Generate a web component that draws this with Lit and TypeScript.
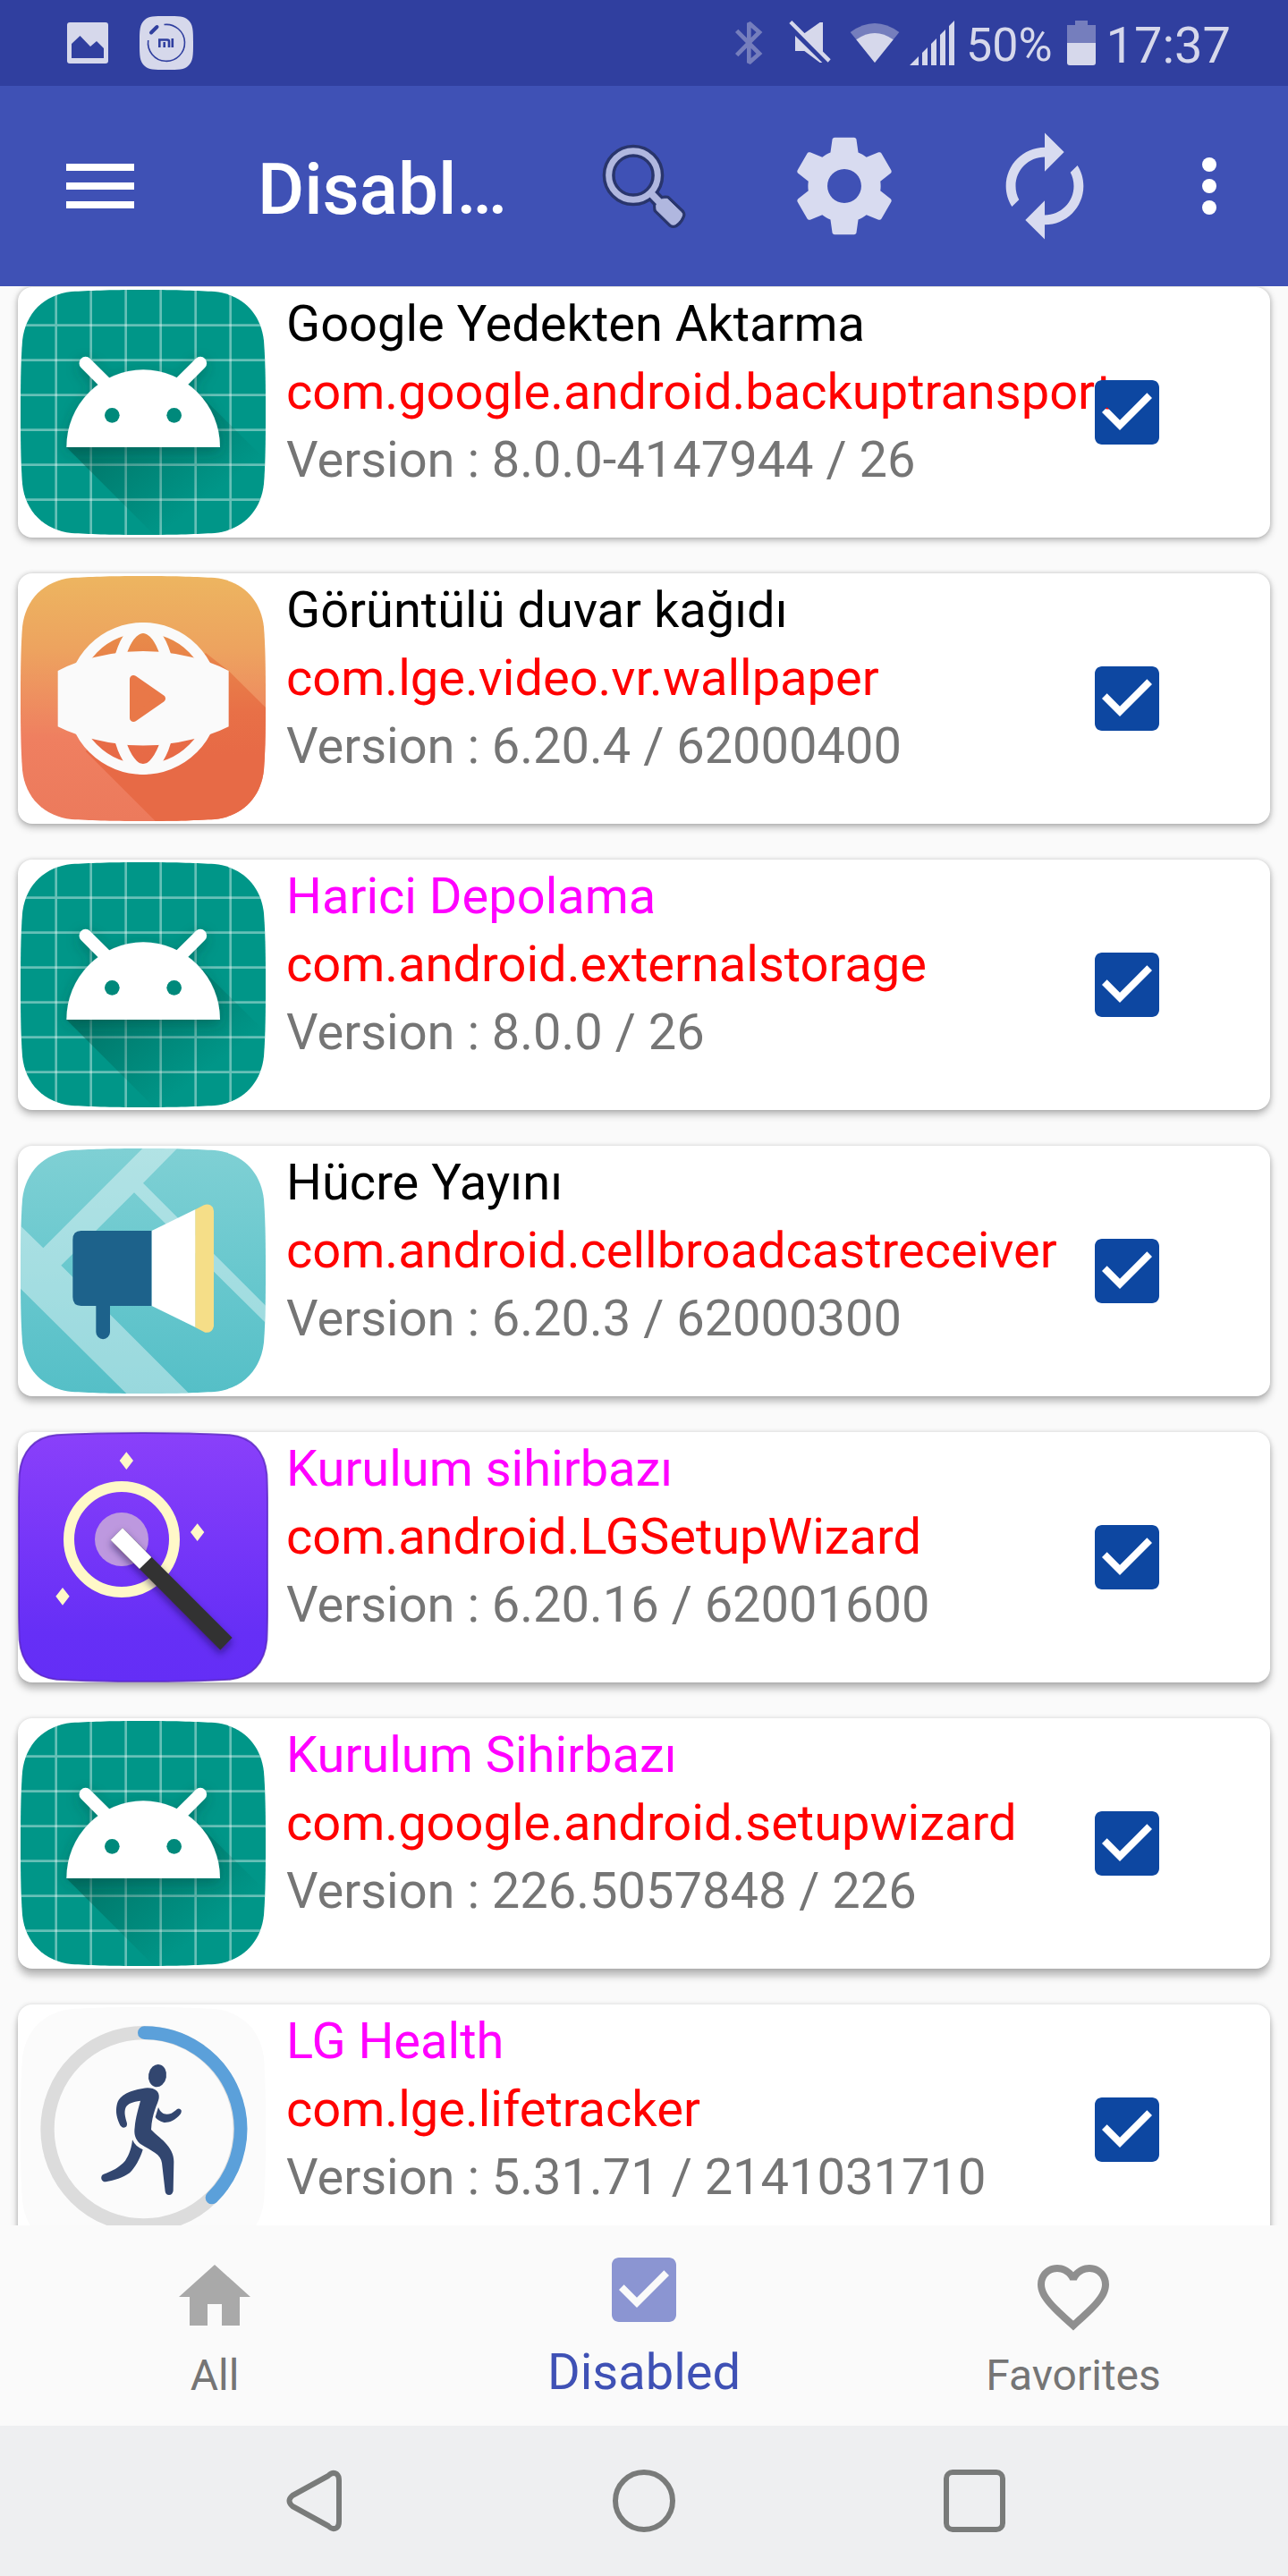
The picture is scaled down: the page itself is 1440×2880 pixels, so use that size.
import { LitElement, html, svg, css } from "lit";
import { customElement, property, state } from "lit/decorators.js";
import { classMap } from "lit/directives/class-map.js";
import { styleMap } from "lit/directives/style-map.js";

type IconName = "android" | "video" | "broadcast" | "wizard" | "health";

interface AppInfo {
  name: string;
  pkg: string;
  version: string;
  icon: IconName;
  system: boolean;
}

const APPS: AppInfo[] = [
  { name: "Google Yedekten Aktarma", pkg: "com.google.android.backuptransport", version: "8.0.0-4147944 / 26", icon: "android", system: false },
  { name: "Görüntülü duvar kağıdı", pkg: "com.lge.video.vr.wallpaper", version: "6.20.4 / 62000400", icon: "video", system: false },
  { name: "Harici Depolama", pkg: "com.android.externalstorage", version: "8.0.0 / 26", icon: "android", system: true },
  { name: "Hücre Yayını", pkg: "com.android.cellbroadcastreceiver", version: "6.20.3 / 62000300", icon: "broadcast", system: false },
  { name: "Kurulum sihirbazı", pkg: "com.android.LGSetupWizard", version: "6.20.16 / 62001600", icon: "wizard", system: true },
  { name: "Kurulum Sihirbazı", pkg: "com.google.android.setupwizard", version: "226.5057848 / 226", icon: "android", system: true },
  { name: "LG Health", pkg: "com.lge.lifetracker", version: "5.31.71 / 2141031710", icon: "health", system: true },
];

const SQUIRCLE =
  "M480 42C600 42 660 45 720 48C812 58 875 120 885 213C891 290 891 390 891 453C891 516 891 616 885 693C875 786 812 848 720 858C660 861 600 864 480 864C360 864 300 861 240 858C148 848 85 786 75 693C69 616 69 516 69 453C69 390 69 290 75 213C85 120 148 58 240 48C300 45 360 42 480 42Z";

const CHECK_BOX =
  "M19 3H5c-1.11 0-2 .9-2 2v14c0 1.1.89 2 2 2h14c1.11 0 2-.9 2-2V5c0-1.1-.89-2-2-2zm-9 14l-5-5 1.41-1.41L10 14.17l7.59-7.59L19 8l-9 9z";

const GRID = [0, 1, 2, 3, 4, 5];

const ICONS = {
  android: svg`
    <defs>
      <clipPath id="shape"><path d=${SQUIRCLE} /></clipPath>
      <linearGradient id="long" gradientUnits="userSpaceOnUse" x1="350" y1="450" x2="620" y2="800">
        <stop offset="0" stop-color="#004d40" stop-opacity=".5" />
        <stop offset="1" stop-color="#004d40" stop-opacity="0" />
      </linearGradient>
      <filter id="soft" x="-20%" y="-20%" width="140%" height="160%">
        <feDropShadow dx="0" dy="14" stdDeviation="22" flood-color="#003d33" flood-opacity=".35" />
      </filter>
    </defs>
    <path d=${SQUIRCLE} fill="#009688" />
    <g clip-path="url(#shape)">
      ${GRID.map((i) => svg`<path d=${`M${188 + i * 117} 30V880M60 ${161 + i * 117}H900`} stroke="#fff" stroke-opacity=".4" stroke-width="8" />`)}
      <path d="M223 570L600 947H1000V720L664 388Z" fill="url(#long)" />
    </g>
    <g filter="url(#soft)">
      <path d="M223 570A257.500 260 0 0 1 738 570Z" fill="#fff" />
      <path d="M287 288L358 359M672 288L601 359" stroke="#fff" stroke-width="43" stroke-linecap="round" />
    </g>
    <circle cx="376" cy="463" r="25" fill="#00897b" />
    <circle cx="584" cy="463" r="25" fill="#00897b" />
  `,
  video: svg`
    <defs>
      <clipPath id="shape"><path d=${SQUIRCLE} /></clipPath>
      <linearGradient id="bg" x1="0" y1="0" x2="0" y2="1">
        <stop offset="0" stop-color="#edb560" />
        <stop offset=".3" stop-color="#eda35f" />
        <stop offset=".66" stop-color="#ef7f60" />
        <stop offset="1" stop-color="#ec7a5c" />
      </linearGradient>
      <linearGradient id="deep" gradientUnits="userSpaceOnUse" x1="0" y1="230" x2="0" y2="640">
        <stop offset="0" stop-color="#e88c4a" />
        <stop offset=".65" stop-color="#e87047" />
        <stop offset="1" stop-color="#e76a46" />
      </linearGradient>
    </defs>
    <path d=${SQUIRCLE} fill="url(#bg)" />
    <path d="M690 300L767 360L960 552V900H557L287 630Z" fill="url(#deep)" clip-path="url(#shape)" />
    <circle cx="480" cy="453" r="237" fill="url(#deep)" stroke="#fafafa" stroke-width="36" />
    <ellipse cx="480" cy="453" rx="96" ry="237" fill="none" stroke="#fafafa" stroke-width="36" />
    <path d="M194 360Q225 343 257 332Q480 256 704 332Q736 343 767 360V547Q736 563 704 573Q480 648 257 573Q225 563 194 547Z" fill="#fafafa" />
    <path d="M448 388V518L542 453Z" fill="#e97848" stroke="#e97848" stroke-width="26" stroke-linejoin="round" />
  `,
  broadcast: svg`
    <defs>
      <clipPath id="shape"><path d=${SQUIRCLE} /></clipPath>
      <linearGradient id="bg" x1="0" y1="0" x2="0" y2="1">
        <stop offset="0" stop-color="#7fd0d4" />
        <stop offset=".5" stop-color="#69c8ce" />
        <stop offset="1" stop-color="#55bfc7" />
      </linearGradient>
    </defs>
    <path d=${SQUIRCLE} fill="url(#bg)" />
    <path d="M487 33L603 33L480 158L900 578V636L450 190L205 434L644 874H434L60 503V293L145 376Z" fill="#fff" fill-opacity=".4" clip-path="url(#shape)" />
    <path d="M509 318H272Q244 318 244 348V541Q244 570 272 570H322V658A23 23 0 0 0 369 658V570H509Z" fill="#1d628b" />
    <path d="M509 318L656 246V642L509 570Z" fill="#fff" />
    <path d="M655 247L684 232Q702 225 714 240L717 252V638Q712 662 688 659L655 642Z" fill="#f5de88" />
  `,
  wizard: svg`
    <defs>
      <linearGradient id="bg" x1="0" y1="0" x2="0" y2="1">
        <stop offset="0" stop-color="#8a40fa" />
        <stop offset=".45" stop-color="#7636f8" />
        <stop offset=".8" stop-color="#662ff6" />
        <stop offset="1" stop-color="#642ef6" />
      </linearGradient>
      <filter id="soft" x="-20%" y="-20%" width="140%" height="150%">
        <feDropShadow dx="0" dy="14" stdDeviation="12" flood-color="#14003c" flood-opacity=".5" />
      </filter>
    </defs>
    <path d="M480 36C620 36 700 39 770 43C845 50 888 98 895 175C899 260 897 380 897 453C897 526 899 646 895 731C888 808 845 856 770 863C700 867 620 870 480 870C340 870 260 867 190 863C115 856 72 808 65 731C61 646 63 526 63 453C63 380 61 260 65 175C72 98 115 50 190 43C260 39 340 36 480 36Z" fill="url(#bg)" stroke="#5724bd" stroke-opacity=".75" stroke-width="6" />
    <circle cx="408" cy="393" r="177" fill="none" stroke="#fff8c8" stroke-width="36" />
    <circle cx="408" cy="393" r="90" fill="#bd98df" />
    <path d="M424 100L447 129L424 159L401 129ZM662 340L685 369L662 399L639 369ZM210 555L233 584L210 614L187 584Z" fill="#fff8c8" />
    <g filter="url(#soft)">
      <path d="M371 395L411 355L779 723L739 764Z" fill="#333" />
      <path d="M371 395L411 355L508 453L468 492Z" fill="#fff" />
    </g>
  `,
  health: svg`
    <path d=${SQUIRCLE} fill="#fbfbfb" />
    <circle cx="482" cy="451" r="323" fill="none" stroke="#dcdcdc" stroke-width="46" />
    <path d="M484 128A323 323 0 0 1 711 681" fill="none" stroke="#5ba0da" stroke-width="44" stroke-linecap="round" />
    <g fill="#32466f">
      <ellipse cx="528" cy="272" rx="30" ry="38" transform="rotate(10 528 272)" />
      <path d="M495 313C520 313 536 325 533 347C530 366 510 395 507 453C530 478 584 508 583 560L581 658Q579 672 567 672Q556 672 554 660L543 565C540 535 510 525 470 500C452 485 449 465 452 445C455 410 465 380 471 356C445 360 430 364 422 378C415 395 420 410 426 432Q427 446 415 446Q406 445 401 434C388 405 388 385 393 365C405 330 450 318 495 313Z" />
      <path d="M531 378C540 400 555 405 575 398C585 393 590 387 594 384Q603 380 608 388Q610 395 606 400C585 425 565 430 550 429C535 425 525 418 521 411Z" />
      <path d="M444 487C452 503 463 513 479 520C470 550 455 578 435 598C410 615 385 622 355 628Q344 629 340 618Q338 606 348 602C375 592 400 580 420 557C435 535 442 510 444 487Z" />
    </g>
  `,
};

@customElement("app-card")
export class AppCard extends LitElement {
  @property({ attribute: false }) app!: AppInfo;
  @property({ type: Number }) depth = 0;

  static styles = css`
    :host {
      display: block;
    }
    .card {
      display: flex;
      align-items: center;
      height: 280px;
      border-radius: 16px;
      background: #fff;
      box-shadow:
        0 var(--drop) 8px rgba(0, 0, 0, 0.26),
        0 0 5px rgba(0, 0, 0, 0.16);
    }
    .icon {
      display: block;
      flex: none;
      width: 280px;
      height: 280px;
    }
    .details {
      flex: 1;
      min-width: 0;
      align-self: flex-start;
      padding: 3px 0 0 20px;
      font-size: 56px;
      line-height: 76px;
      white-space: nowrap;
    }
    .line {
      margin: 0;
      font-size: 56px;
      font-weight: 400;
    }
    .name {
      color: #000;
    }
    .name.system {
      color: #f0f;
    }
    .pkg {
      color: #f00;
    }
    .version {
      color: #757575;
    }
    .check {
      position: relative;
      display: grid;
      flex: none;
      width: 72px;
      height: 72px;
      margin-right: 124px;
    }
    .check input,
    .check svg {
      grid-area: 1 / 1;
      width: 72px;
      height: 72px;
      margin: 0;
    }
    .check input {
      appearance: none;
      border-radius: 8px;
    }
    .check input:not(:checked) {
      border: 8px solid #757575;
      box-sizing: border-box;
    }
    .check svg {
      pointer-events: none;
      fill: #0d47a1;
    }
    .check input:not(:checked) + svg {
      visibility: hidden;
    }
  `;

  render() {
    const { name, pkg, version, icon, system } = this.app;
    return html`
      <article class="card" style=${styleMap({ "--drop": `${3 + this.depth}px` })}>
        <svg class="icon" viewBox="60 33 840 840" aria-hidden="true">${ICONS[icon]}</svg>
        <div class="details">
          <h2 class=${classMap({ line: true, name: true, system })}>${name}</h2>
          <p class="line pkg">${pkg}</p>
          <p class="line version">Version : ${version}</p>
        </div>
        <label class="check">
          <input type="checkbox" checked aria-label=${name} />
          <svg viewBox="3 3 18 18" aria-hidden="true"><path d=${CHECK_BOX} /></svg>
        </label>
      </article>
    `;
  }
}

@customElement("status-bar")
export class StatusBar extends LitElement {
  static styles = css`
    :host {
      display: flex;
      flex: none;
      justify-content: space-between;
      height: 96px;
      padding: 0 64px 0 75px;
      background: #303f9f;
      color: #d6d8eb;
    }
    .side {
      display: flex;
      align-items: center;
    }
    .notices {
      gap: 35px;
    }
    svg {
      display: block;
      flex: none;
    }
    .text {
      padding-top: 5px;
    }
    .percent {
      font-size: 52px;
    }
    .clock {
      font-size: 56px;
    }
  `;

  render() {
    return html`
      <div class="side notices">
        <svg width="46" height="46" viewBox="0 0 46 46" aria-hidden="true">
          <rect width="46" height="46" rx="3" fill="#d6d8eb" />
          <path d="M5 24L14.500 15L26 27L33 21L41 29V40H5Z" fill="#303f9f" />
        </svg>
        <svg width="60" height="60" viewBox="0 0 60 60" aria-hidden="true">
          <path d="M30 0C44 0 50 0 54 4C60 9 60 16 60 30C60 44 60 51 54 56C50 60 44 60 30 60C16 60 10 60 6 56C0 51 0 44 0 30C0 16 0 9 6 4C10 0 16 0 30 0Z" fill="#d6d8eb" />
          <g fill="none" stroke="#303f9f">
            <path d="M27.500 9.500A20.500 20.500 0 1 1 9.700 27" stroke-width="1.600" />
            <path d="M13 18.500L19.500 12" stroke-width="4" stroke-linecap="round" />
            <path d="M22.300 35V26.500H31Q33 26.500 33 28.500V35M27.700 29V35M36.800 25V35" stroke-width="2.600" />
          </g>
        </svg>
      </div>
      <div class="side">
        <svg width="60" height="96" viewBox="36 -30 180 288" aria-hidden="true">
          <path d="M71 73L147 150L112 181V47L147 78L71 155" fill="none" stroke="#757ebd" stroke-width="14" stroke-miterlimit="2" />
        </svg>
        <svg width="68" height="96" viewBox="216 -30 204 288" fill="#d6d8eb" aria-hidden="true">
          <path d="M256 39L386 169L377 179L247 48ZM298 82L350 45H360V144ZM267 90L358 180H350L298 141H267Z" />
        </svg>
        <svg width="72" height="96" viewBox="420 -30 216 288" aria-hidden="true">
          <path d="M534 180L452 78Q534 18 616 78Z" fill="#757ebd" />
          <path d="M534 180L472 103Q534 59 596 103Z" fill="#d6d8eb" />
        </svg>
        <svg width="68" height="96" viewBox="636 -30 204 288" fill="#d6d8eb" aria-hidden="true">
          <path d="M651 189L681 159V189ZM693 189V147L711 129V189ZM723 189V117L741 99V189ZM753 189V87L771 69V189ZM783 189V57L801 39V189Z" />
        </svg>
        <span class="text percent">50%</span>
        <svg width="60" height="96" viewBox="0 0 60 96" aria-hidden="true">
          <path d="M16 48V28H25V23H39V28H48V48Z" fill="#757ebd" />
          <path d="M16 48H48V70Q48 73 45 73H19Q16 73 16 70Z" fill="#d6d8eb" />
        </svg>
        <time class="text clock">17:37</time>
      </div>
    `;
  }
}

@customElement("app-root")
export class AppRoot extends LitElement {
  @state() private tab = "Disabled";

  static styles = css`
    :host {
      display: flex;
      flex-direction: column;
      height: 100vh;
      background: #fafafa;
      font-family: Roboto, "Liberation Sans", sans-serif;
    }
    button {
      display: flex;
      align-items: center;
      justify-content: center;
      margin: 0;
      padding: 0;
      border: 0;
      background: none;
      font-family: inherit;
      cursor: pointer;
    }
    svg {
      display: block;
      flex: none;
    }
    .toolbar {
      display: flex;
      flex: none;
      align-items: center;
      height: 224px;
      padding-right: 16px;
      background: #3f51b5;
      color: #fff;
    }
    .menu {
      width: 224px;
      height: 224px;
    }
    .title {
      flex: 1;
      min-width: 0;
      margin: 0 24px 0 64px;
      padding-top: 8px;
      overflow: hidden;
      font-size: 80px;
      line-height: 96px;
      font-weight: 500;
      text-overflow: ellipsis;
      white-space: nowrap;
    }
    .action {
      width: 224px;
      height: 224px;
      color: #d8dbf0;
    }
    .more {
      width: 144px;
      height: 224px;
    }
    .list {
      display: flex;
      flex: 1;
      flex-direction: column;
      gap: 40px;
      min-height: 0;
      padding: 1px 20px 0;
      overflow-y: auto;
      scrollbar-width: none;
    }
    .list app-card {
      flex: none;
    }
    .tabs {
      display: flex;
      flex: none;
      height: 224px;
      background: #fafafa;
    }
    .tab {
      flex: 1;
      flex-direction: column;
      justify-content: space-between;
      padding: 32px 0 24px;
      color: #757575;
      font-size: 48px;
      line-height: 64px;
    }
    .tab svg {
      fill: #8f8f8f;
    }
    .tab .home {
      fill: #a9a9a9;
    }
    .tab.active {
      padding-top: 24px;
      color: #3f51b5;
      font-size: 56px;
      line-height: 72px;
    }
    .tab.active svg {
      fill: #8b95d2;
    }
    .system {
      display: flex;
      flex: none;
      align-items: center;
      justify-content: center;
      gap: 273px;
      height: 168px;
      background: #eeeff1;
    }
    .system svg {
      fill: none;
      stroke: #797b7a;
      stroke-width: 6px;
    }
  `;

  private renderTab(label: string, icon: string, d: string) {
    const active = this.tab === label;
    return html`
      <button
        class=${classMap({ tab: true, active })}
        aria-current=${active ? "page" : "false"}
        @click=${() => (this.tab = label)}
      >
        <svg class=${icon} width="96" height="96" viewBox="0 0 24 24" aria-hidden="true"><path d=${d} /></svg>
        <span>${label}</span>
      </button>
    `;
  }

  render() {
    return html`
      <status-bar></status-bar>
      <header class="toolbar">
        <button class="menu" aria-label="Menu">
          <svg width="76" height="50" viewBox="0 0 76 50" fill="#fff" aria-hidden="true">
            <path d="M0 0H76V8H0ZM0 21H76V29H0ZM0 42H76V50H0Z" />
          </svg>
        </button>
        <h1 class="title">Disabled</h1>
        <button class="action" aria-label="Search">
          <svg width="130" height="130" viewBox="-15 9 390 390" aria-hidden="true">
            <g fill="none" stroke="#29356c" stroke-linejoin="round">
              <circle cx="144" cy="168" r="82" stroke-width="42" />
              <path d="M203 228L230 256" stroke-width="44" />
              <path d="M221 270Q221 262 234 251Q244 245 258 247L306 293Q310 299 307 305Q300 323 286 332Q278 336 271 332L222 284Z" stroke-width="22" />
            </g>
            <g fill="#b0b7df" stroke="#b0b7df">
              <circle cx="144" cy="168" r="82" fill="none" stroke-width="21" />
              <path d="M200 225L232 258" stroke-width="24" />
              <path d="M221 270Q221 262 234 251Q244 245 258 247L306 293Q310 299 307 305Q300 323 286 332Q278 336 271 332L222 284Z" stroke-width="3" />
            </g>
          </svg>
        </button>
        <button class="action" aria-label="Settings">
          <svg width="130" height="130" viewBox="0 0 24 24" fill="currentColor" aria-hidden="true">
            <path d="M19.430 12.980c.04-.32.07-.64.07-.98s-.03-.66-.07-.98l2.110-1.650c.19-.15.24-.42.12-.64l-2-3.460c-.12-.22-.39-.3-.61-.22l-2.490 1c-.52-.4-1.080-.73-1.690-.98l-.38-2.650C14.460 2.180 14.250 2 14 2h-4c-.25 0-.46.18-.49.42l-.38 2.650c-.61.25-1.170.59-1.690.98l-2.490-1c-.23-.09-.49 0-.61.22l-2 3.460c-.13.22-.07.49.12.64l2.110 1.650c-.04.32-.07.65-.07.98s.03.66.07.98l-2.110 1.650c-.19.15-.24.42-.12.64l2 3.460c.12.22.39.3.61.22l2.490-1c.52.4 1.080.73 1.690.98l.38 2.650c.03.24.24.42.49.42h4c.25 0 .46-.18.49-.42l.38-2.650c.61-.25 1.170-.59 1.690-.98l2.490 1c.23.09.49 0 .61-.22l2-3.460c.12-.22.07-.49-.12-.64l-2.110-1.650zM12 15.500c-1.930 0-3.500-1.570-3.500-3.500s1.570-3.500 3.500-3.500 3.500 1.570 3.500 3.500-1.570 3.500-3.500 3.500z" />
          </svg>
        </button>
        <button class="action" aria-label="Refresh">
          <svg width="130" height="130" viewBox="0 0 24 24" fill="currentColor" aria-hidden="true">
            <path d="M12 6v3l4-4-4-4v3c-4.420 0-8 3.580-8 8 0 1.570.46 3.030 1.240 4.260L6.700 14.800c-.45-.83-.7-1.790-.7-2.800 0-3.310 2.690-6 6-6zm6.760 1.740L17.300 9.200c.44.84.7 1.790.7 2.800 0 3.310-2.690 6-6 6v-3l-4 4 4 4v-3c4.420 0 8-3.580 8-8 0-1.570-.46-3.030-1.240-4.260z" />
          </svg>
        </button>
        <button class="more" aria-label="More options">
          <svg width="16" height="64" viewBox="0 0 16 64" fill="#fff" aria-hidden="true">
            <circle cx="8" cy="8" r="8" />
            <circle cx="8" cy="32" r="8" />
            <circle cx="8" cy="56" r="8" />
          </svg>
        </button>
      </header>
      <main class="list">
        ${APPS.map((app, i) => html`<app-card .app=${app} .depth=${i}></app-card>`)}
      </main>
      <nav class="tabs" aria-label="Lists">
        ${this.renderTab("All", "home", "M10 20v-6h4v6h5v-8h3L12 3 2 12h3v8z")}
        ${this.renderTab("Disabled", "box", CHECK_BOX)}
        ${this.renderTab(
          "Favorites",
          "heart",
          "M16.500 3c-1.740 0-3.410.81-4.500 2.090C10.910 3.810 9.240 3 7.500 3 4.420 3 2 5.420 2 8.500c0 3.780 3.400 6.860 8.550 11.540L12 21.350l1.450-1.320C18.600 15.360 22 12.280 22 8.500 22 5.420 19.580 3 16.500 3zm-4.400 15.550l-.1.1-.1-.1C7.140 14.240 4 11.390 4 8.500 4 6.500 5.500 5 7.500 5c1.540 0 3.040.99 3.570 2.360h1.870C13.460 5.990 14.960 5 16.500 5c2 0 3.500 1.500 3.500 3.500 0 2.890-3.140 5.740-7.900 10.050z"
        )}
      </nav>
      <footer class="system">
        <button aria-label="Back">
          <svg width="96" height="96" viewBox="0 0 96 96" aria-hidden="true">
            <path d="M64 20Q69 15 73.500 18Q76 20 76 25V71Q76 76 73.500 78Q69 81 64 76L24 54Q17 48 24 42Z" stroke-linejoin="round" />
          </svg>
        </button>
        <button aria-label="Home">
          <svg width="96" height="96" viewBox="0 0 96 96" aria-hidden="true"><circle cx="48" cy="48" r="32" /></svg>
        </button>
        <button aria-label="Recents">
          <svg width="96" height="96" viewBox="0 0 96 96" aria-hidden="true"><rect x="17" y="16" width="63" height="64" rx="7" /></svg>
        </button>
      </footer>
    `;
  }
}
